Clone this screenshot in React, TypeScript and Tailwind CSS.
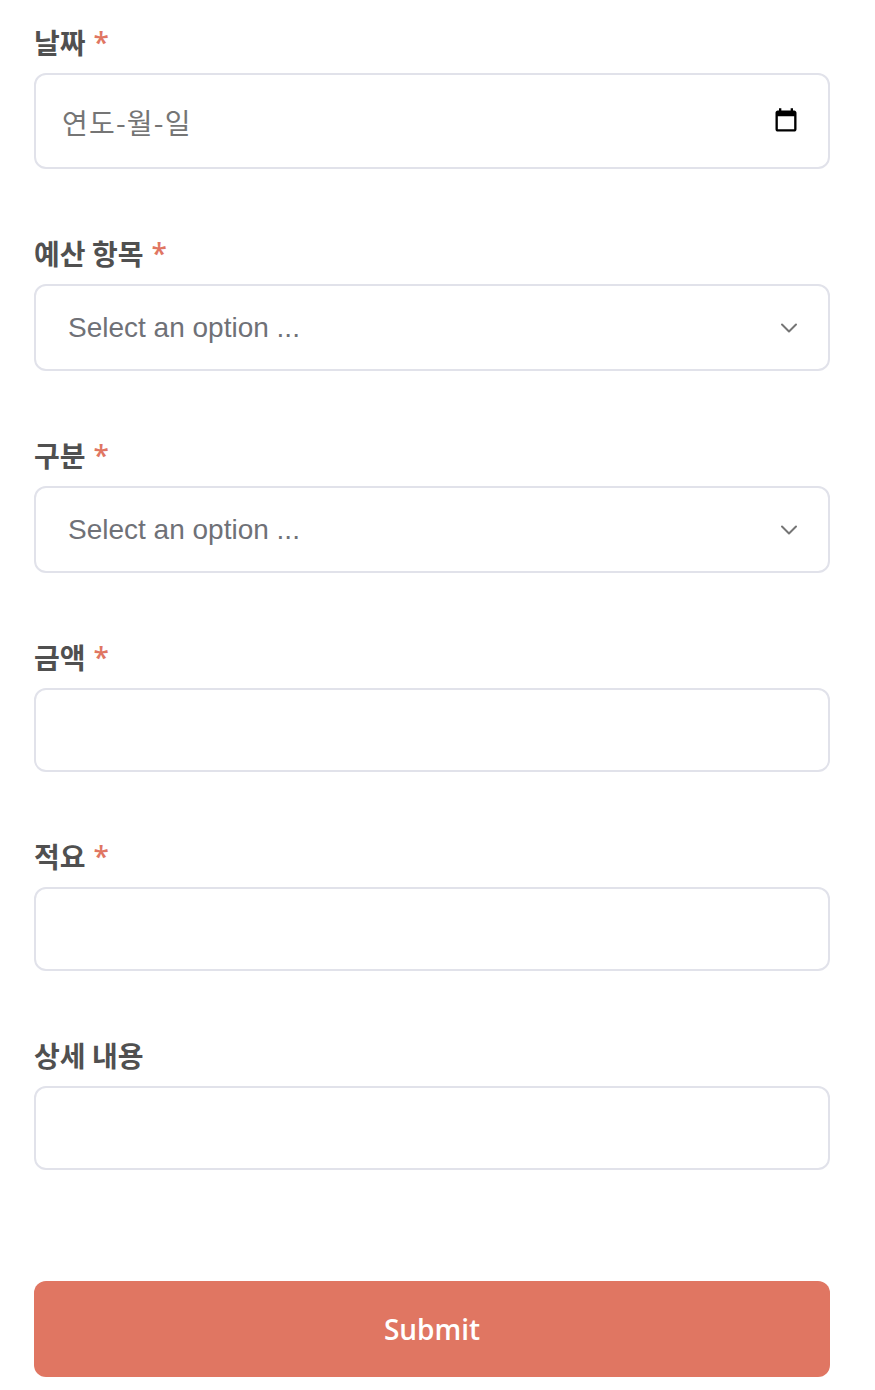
import { ChevronDown } from 'lucide-react';

const cjk = 'font-["Noto_Sans_CJK_KR",sans-serif]';

function Label({ text, required }: { text: string; required?: boolean }) {
  return (
    <div className={`mb-4 flex h-8 items-center gap-2 pt-0.5 text-[28px] font-bold text-[#505050] ${cjk}`}>
      <span>{text}</span>
      {required && <span className='font-["Open_Sans",sans-serif] font-semibold text-[#e07662]'>*</span>}
    </div>
  );
}

function DateField() {
  return (
    <div className="flex h-24 items-center justify-between rounded-xl border-2 border-[#e1e2ea] bg-white pl-[26px] pr-[28px]">
      <span className={`pt-0.5 text-[28px] tracking-[1.2px] text-[#757575] ${cjk}`}>연도-월-일</span>
      <svg width="28" height="28" viewBox="0 0 24 24" fill="#000">
        <path d="M19 3h-1V1h-2v2H8V1H6v2H5c-1.1 0-2 .9-2 2v14c0 1.1.9 2 2 2h14c1.1 0 2-.9 2-2V5c0-1.1-.9-2-2-2zm0 16H5V8h14v11z" />
      </svg>
    </div>
  );
}

function SelectField() {
  return (
    <div className="flex h-[87px] items-center justify-between rounded-xl border-2 border-[#e1e2ea] bg-white pl-8 pr-[25px]">
      <span className='font-["Liberation_Sans",sans-serif] text-[28px] text-[#6f7177]'>Select an option ...</span>
      <ChevronDown size={28} strokeWidth={1.7} className="text-[#757575]" />
    </div>
  );
}

function TextField() {
  return <div className="h-[84px] rounded-xl border-2 border-[#e1e2ea] bg-white" />;
}

export default function App() {
  return (
    <div className="min-h-[1390px] bg-white pl-[34px] pr-[45px] pt-[25px]">
      <div className="flex flex-col gap-[67px]">
        <div>
          <Label text="날짜" required />
          <DateField />
        </div>
        <div>
          <Label text="예산 항목" required />
          <SelectField />
        </div>
        <div>
          <Label text="구분" required />
          <SelectField />
        </div>
        <div>
          <Label text="금액" required />
          <TextField />
        </div>
        <div>
          <Label text="적요" required />
          <TextField />
        </div>
        <div>
          <Label text="상세 내용" />
          <TextField />
        </div>
      </div>
      <button className='mt-[111px] flex h-24 w-full items-center justify-center rounded-xl bg-[#e07662] font-["Open_Sans",sans-serif] text-[28px] font-semibold text-white'>
        Submit
      </button>
    </div>
  );
}
